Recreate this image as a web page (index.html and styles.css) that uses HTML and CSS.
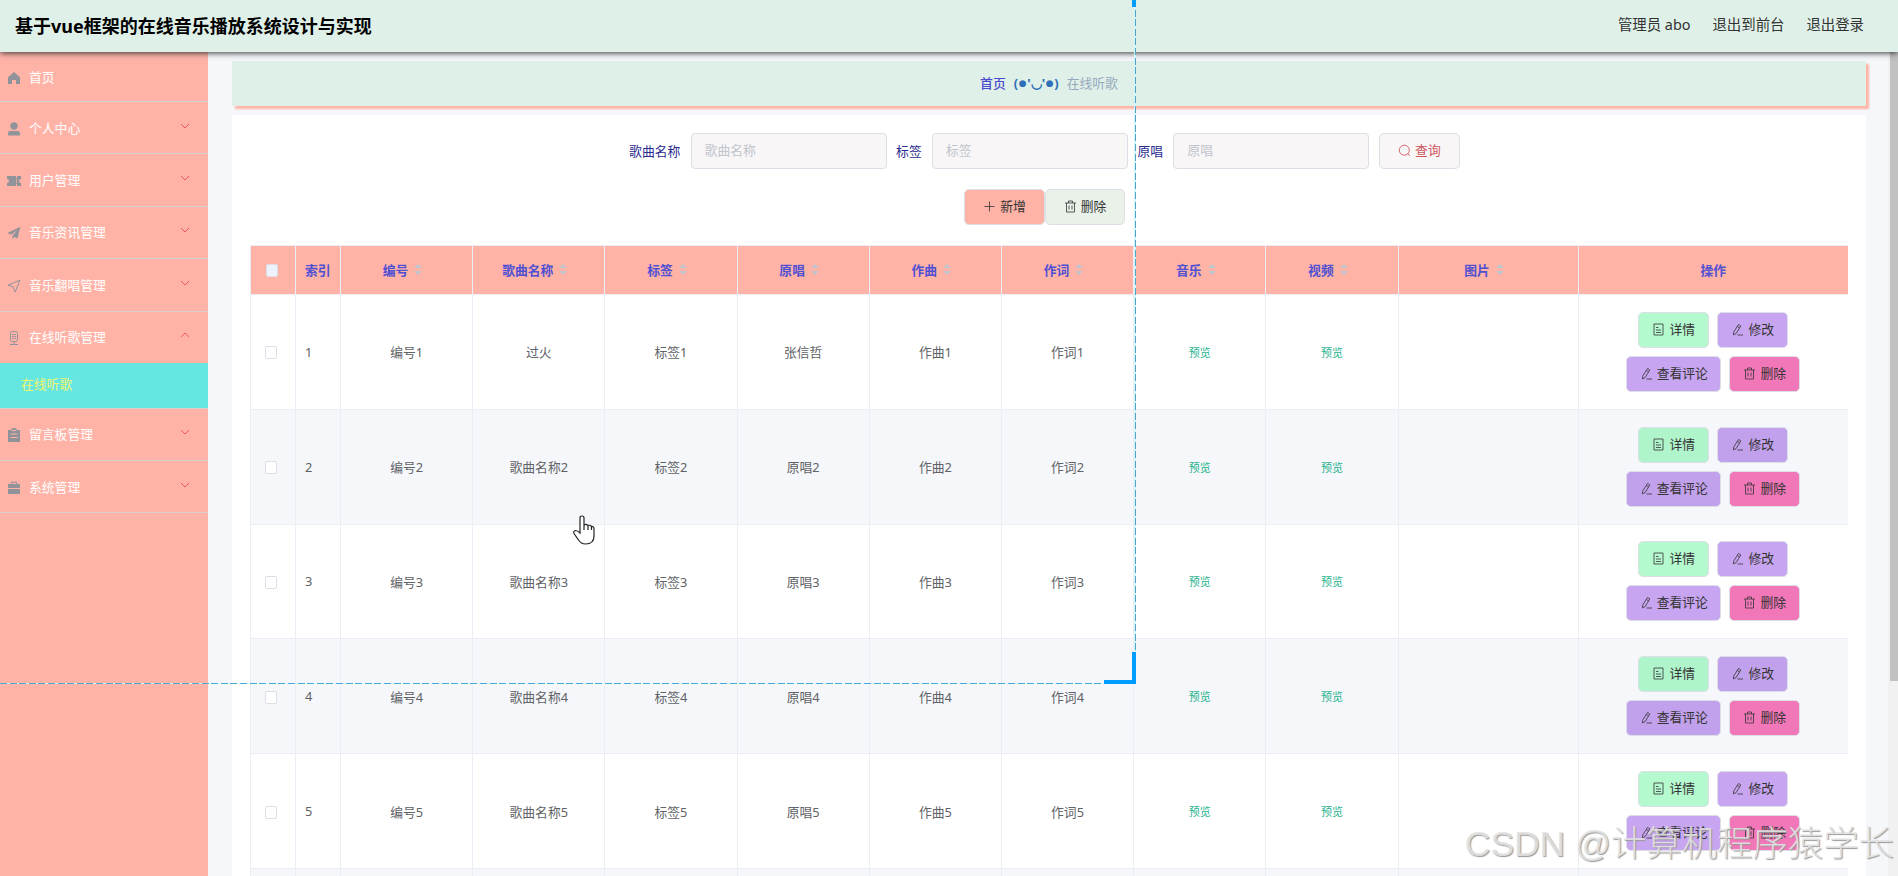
FILE: index.html
```html
<!DOCTYPE html>
<html lang="zh-CN">
<head>
    <meta charset="UTF-8">
    <title>在线听歌</title>
    <link rel="stylesheet" href="styles.css">
</head>
<body>
    <!-- 图标 -->
    <svg class="sprite">
        <symbol id="i-home" viewBox="0 0 14 14"><path d="M7 1L1 6.3V13h4V9h4v4h4V6.3z"/></symbol>
        <symbol id="i-user" viewBox="0 0 14 14"><circle cx="7" cy="4" r="3.7"/><path d="M1 13.4V11q0-2 2.4-2h7.2Q13 9 13 11v2.4z"/></symbol>
        <symbol id="i-ticket" viewBox="0 0 14 14"><path d="M0 2h9v2h1V2h4v3a2 2 0 0 0 0 4v3h-4v-2H9v2H0V9a2 2 0 0 0 0-4zM9 5v1.5h1V5zM9 7.5V9h1V7.5z" fill-rule="evenodd"/></symbol>
        <symbol id="i-plane" viewBox="0 0 14 14"><path d="M13.4.8L.4 7l3.8 1.8L11 3.4 5.6 9.6v3.8l2-2.6 2.8 1.8z"/></symbol>
        <symbol id="i-nav" viewBox="0 0 14 14"><path d="M12.9 1.2L1 6.2l5 1.6L8.2 13z" fill="none" stroke="currentColor"/></symbol>
        <symbol id="i-mic" viewBox="0 0 14 14"><rect x="3.5" y=".5" width="7" height="10" rx="2" fill="none" stroke="currentColor"/><path d="M5 3h1.6v1H5zm2.4 0H9v1H7.4zM5 5h1.6v1H5zm2.4 0H9v1H7.4zM5 7h1.6v1H5zm2.4 0H9v1H7.4zM6.5 10.5h1V13h-1zM3 13h8v1H3z"/></symbol>
        <symbol id="i-board" viewBox="0 0 14 14"><path d="M1 2h3.5V.3h5V2H13v12H1zM3.5 5.5v1h7v-1zM3.5 9v1h7V9zM5 2v1h4V2z" fill-rule="evenodd"/></symbol>
        <symbol id="i-case" viewBox="0 0 14 14"><path d="M4 3V.8h6V3h3v4H1V3zm1 0h4V1.8H5zM1 8h12v5H1z" fill-rule="evenodd"/></symbol>
        <symbol id="i-down" viewBox="0 0 10 6"><path d="M1 1l4 4 4-4" fill="none" stroke="currentColor"/></symbol>
        <symbol id="i-up" viewBox="0 0 10 6"><path d="M1 5l4-4 4 4" fill="none" stroke="currentColor"/></symbol>
        <symbol id="i-search" viewBox="0 0 13 13"><circle cx="6.3" cy="6.2" r="5" fill="none" stroke="currentColor" stroke-width=".9"/><path d="M9.7 9.7l2 2" stroke="currentColor"/></symbol>
        <symbol id="i-plus" viewBox="0 0 13 13"><path d="M6.5 1.5v10M1.5 6.5h10" stroke="currentColor" stroke-width=".8"/></symbol>
        <symbol id="i-del" viewBox="0 0 13 13"><path d="M1 3h11M4.500 3V1h4v2M2.500 3v9h8V3M5 5.500v4M8 5.500v4" fill="none" stroke="currentColor" stroke-width=".8"/></symbol>
        <symbol id="i-doc" viewBox="0 0 13 13"><path d="M2 1h9v11H2zM4 4.500h2.500M4 7h5M4 9.500h5" fill="none" stroke="currentColor" stroke-width=".8"/></symbol>
        <symbol id="i-edit" viewBox="0 0 13 13"><path d="M7.500 1.500l2.300 1.400-4.600 7.600-2.800 1.400.4-3zM6.300 3.500l2.300 1.400M6.500 12h5.500" fill="none" stroke="currentColor" stroke-width=".8"/></symbol>
    </svg>

    <header class="header">
        <h1 class="header-title">基于vue框架的在线音乐播放系统设计与实现</h1>
        <div class="header-right">
            <span>管理员 abo</span>
            <span>退出到前台</span>
            <span>退出登录</span>
        </div>
    </header>

    <div class="container">
        <!-- 左侧菜单 -->
        <ul class="menu">
            <li class="menu-item first"><svg class="m-icon"><use href="#i-home"/></svg>首页</li>
            <li class="menu-item"><svg class="m-icon"><use href="#i-user"/></svg>个人中心<svg class="arrow"><use href="#i-down"/></svg></li>
            <li class="menu-item"><svg class="m-icon"><use href="#i-ticket"/></svg>用户管理<svg class="arrow"><use href="#i-down"/></svg></li>
            <li class="menu-item"><svg class="m-icon"><use href="#i-plane"/></svg>音乐资讯管理<svg class="arrow"><use href="#i-down"/></svg></li>
            <li class="menu-item"><svg class="m-icon"><use href="#i-nav"/></svg>音乐翻唱管理<svg class="arrow"><use href="#i-down"/></svg></li>
            <li class="menu-item open"><svg class="m-icon"><use href="#i-mic"/></svg>在线听歌管理<svg class="arrow"><use href="#i-up"/></svg></li>
            <li class="menu-sub">在线听歌</li>
            <li class="menu-item"><svg class="m-icon"><use href="#i-board"/></svg>留言板管理<svg class="arrow"><use href="#i-down"/></svg></li>
            <li class="menu-item"><svg class="m-icon"><use href="#i-case"/></svg>系统管理<svg class="arrow"><use href="#i-down"/></svg></li>
        </ul>

        <main class="main">
            <div class="breadcrumb">
                <span class="home">首页</span>
                <span class="face">(<i class="dot">●</i>'◡'<i class="dot">●</i>)</span>
                <span class="current">在线听歌</span>
            </div>

            <div class="card">
                <form class="search">
                    <label>歌曲名称</label>
                    <input type="text" placeholder="歌曲名称">
                    <label>标签</label>
                    <input type="text" placeholder="标签">
                    <label>原唱</label>
                    <input type="text" placeholder="原唱">
                    <button type="button" class="btn btn-search"><svg><use href="#i-search"/></svg>查询</button>
                </form>
                <div class="toolbar">
                    <button class="btn btn-add"><svg><use href="#i-plus"/></svg>新增</button>
                    <button class="btn btn-remove"><svg><use href="#i-del"/></svg>删除</button>
                </div>

                <!-- 歌曲列表 -->
                <div class="table">
                    <div class="row head">
                        <div><i class="check"></i></div>
                        <div class="index">索引</div>
                        <div>编号<i class="sort"></i></div>
                        <div>歌曲名称<i class="sort"></i></div>
                        <div>标签<i class="sort"></i></div>
                        <div>原唱<i class="sort"></i></div>
                        <div>作曲<i class="sort"></i></div>
                        <div>作词<i class="sort"></i></div>
                        <div>音乐<i class="sort"></i></div>
                        <div>视频<i class="sort"></i></div>
                        <div>图片<i class="sort"></i></div>
                        <div>操作</div>
                    </div>
                    <div class="row">
                        <div><i class="check"></i></div>
                        <div class="index">1</div>
                        <div>编号1</div>
                        <div>过火</div>
                        <div>标签1</div>
                        <div>张信哲</div>
                        <div>作曲1</div>
                        <div>作词1</div>
                        <div class="link">预览</div>
                        <div class="link">预览</div>
                        <div></div>
                        <div class="ops">
                            <button class="btn btn-info"><svg><use href="#i-doc"/></svg>详情</button>
                            <button class="btn btn-edit"><svg><use href="#i-edit"/></svg>修改</button>
                            <button class="btn btn-edit wide"><svg><use href="#i-edit"/></svg>查看评论</button>
                            <button class="btn btn-del"><svg><use href="#i-del"/></svg>删除</button>
                        </div>
                    </div>
                    <div class="row striped">
                        <div><i class="check"></i></div>
                        <div class="index">2</div>
                        <div>编号2</div>
                        <div>歌曲名称2</div>
                        <div>标签2</div>
                        <div>原唱2</div>
                        <div>作曲2</div>
                        <div>作词2</div>
                        <div class="link">预览</div>
                        <div class="link">预览</div>
                        <div></div>
                        <div class="ops">
                            <button class="btn btn-info"><svg><use href="#i-doc"/></svg>详情</button>
                            <button class="btn btn-edit"><svg><use href="#i-edit"/></svg>修改</button>
                            <button class="btn btn-edit wide"><svg><use href="#i-edit"/></svg>查看评论</button>
                            <button class="btn btn-del"><svg><use href="#i-del"/></svg>删除</button>
                        </div>
                    </div>
                    <div class="row">
                        <div><i class="check"></i></div>
                        <div class="index">3</div>
                        <div>编号3</div>
                        <div>歌曲名称3</div>
                        <div>标签3</div>
                        <div>原唱3</div>
                        <div>作曲3</div>
                        <div>作词3</div>
                        <div class="link">预览</div>
                        <div class="link">预览</div>
                        <div></div>
                        <div class="ops">
                            <button class="btn btn-info"><svg><use href="#i-doc"/></svg>详情</button>
                            <button class="btn btn-edit"><svg><use href="#i-edit"/></svg>修改</button>
                            <button class="btn btn-edit wide"><svg><use href="#i-edit"/></svg>查看评论</button>
                            <button class="btn btn-del"><svg><use href="#i-del"/></svg>删除</button>
                        </div>
                    </div>
                    <div class="row striped">
                        <div><i class="check"></i></div>
                        <div class="index">4</div>
                        <div>编号4</div>
                        <div>歌曲名称4</div>
                        <div>标签4</div>
                        <div>原唱4</div>
                        <div>作曲4</div>
                        <div>作词4</div>
                        <div class="link">预览</div>
                        <div class="link">预览</div>
                        <div></div>
                        <div class="ops">
                            <button class="btn btn-info"><svg><use href="#i-doc"/></svg>详情</button>
                            <button class="btn btn-edit"><svg><use href="#i-edit"/></svg>修改</button>
                            <button class="btn btn-edit wide"><svg><use href="#i-edit"/></svg>查看评论</button>
                            <button class="btn btn-del"><svg><use href="#i-del"/></svg>删除</button>
                        </div>
                    </div>
                    <div class="row">
                        <div><i class="check"></i></div>
                        <div class="index">5</div>
                        <div>编号5</div>
                        <div>歌曲名称5</div>
                        <div>标签5</div>
                        <div>原唱5</div>
                        <div>作曲5</div>
                        <div>作词5</div>
                        <div class="link">预览</div>
                        <div class="link">预览</div>
                        <div></div>
                        <div class="ops">
                            <button class="btn btn-info"><svg><use href="#i-doc"/></svg>详情</button>
                            <button class="btn btn-edit"><svg><use href="#i-edit"/></svg>修改</button>
                            <button class="btn btn-edit wide"><svg><use href="#i-edit"/></svg>查看评论</button>
                            <button class="btn btn-del"><svg><use href="#i-del"/></svg>删除</button>
                        </div>
                    </div>
                    <div class="row striped last">
                        <div></div><div></div><div></div><div></div><div></div><div></div>
                        <div></div><div></div><div></div><div></div><div></div><div></div>
                    </div>
                </div>
            </div>
        </main>
        <div class="scrollbar"><div class="thumb"></div></div>
    </div>

    <!-- 选区框 -->
    <div class="select-box"></div>
    <div class="select-corner"></div>
    <div class="select-tip"></div>
    <svg class="cursor" viewBox="0 0 24 31"><path d="M8 18V3q0-2 2-2t2 2v7q2-1.500 4 .5 2-.8 3.500 1 2.500-.3 2.500 2V21q0 8-8.500 8Q9 29 6.500 25L2 18.500Q1 16 3.500 15.500 5.500 15.500 8 18zM12 10v5M16 10.500V15M19.500 11.500V15" fill="#fff" stroke="#222" stroke-width="1.200"/></svg>
    <div class="watermark">CSDN @计算机程序猿学长</div>
</body>
</html>
```
FILE: styles.css
```css
* {
    box-sizing: border-box;
}
body {
    margin: 0;
    height: 876px;
    overflow: hidden;
    display: flex;
    flex-direction: column;
    background: #f5f7fa;
    font-family: "Noto Sans", "Noto Sans CJK SC", sans-serif;
    font-size: 12.8px;
    color: #606266;
}
.sprite {
    position: absolute;
    width: 0;
    height: 0;
}
/* 顶部 */
.header {
    position: relative;
    z-index: 2;
    flex: none;
    height: 52px;
    padding: 0 34px 0 15px;
    display: flex;
    align-items: center;
    justify-content: space-between;
    background: #dff0e8;
    box-shadow: 0 1px 6px #333;
}
.header-title {
    margin: 0;
    font-size: 18px;
    line-height: 50px;
    color: #000;
}
.header-right {
    display: flex;
    gap: 22px;
    font-size: 14.4px;
    line-height: 48px;
    color: #333;
    padding-bottom: 3px;
}
.container {
    flex: 1;
    min-height: 0;
    display: flex;
}
/* 左侧菜单 */
.menu {
    flex: none;
    width: 208px;
    margin: 0;
    padding: 0;
    list-style: none;
    background: #ffb3a7;
    color: #fff;
}
.menu-item {
    display: flex;
    align-items: center;
    height: 52.4px;
    padding: 0 18px 1px 7px;
    border-bottom: 1px solid #d8d0cd;
}
.menu-item.first {
    height: 50px;
}
.menu-item.open {
    height: 51px;
    border-bottom: 0;
}
.m-icon {
    width: 14px;
    height: 14px;
    margin: 3px 8px 0 0;
    color: #909399;
    fill: #909399;
}
.arrow {
    width: 10px;
    height: 6px;
    margin: 0 0 3px auto;
    color: #f0565c;
}
.menu-sub {
    height: 46px;
    line-height: 43px;
    padding-left: 21px;
    background: #66e6e1;
    color: #f0f56e;
    border-bottom: 1px solid #d8d0cd;
}
/* 内容区 */
.main {
    flex: 1;
    display: flex;
    flex-direction: column;
    gap: 9px;
    padding: 9px 22px 0 24px;
    min-width: 0;
}
.breadcrumb {
    flex: none;
    height: 45px;
    padding-bottom: 2px;
    display: flex;
    align-items: center;
    justify-content: center;
    gap: 8px;
    background: #dff0e8;
    box-shadow: 3px 3px 2px #ffb3a7;
}
.home {
    color: #4b4bd0;
    font-weight: 500;
}
.face {
    display: flex;
    align-items: center;
    justify-content: space-between;
    width: 45px;
    white-space: nowrap;
    font-weight: bold;
    color: #2f6fb8;
}
.dot {
    font-family: "DejaVu Sans", sans-serif;
    font-size: 9px;
    font-style: normal;
    font-weight: normal;
}
.current {
    color: #97a8be;
}
.card {
    flex: 1;
    padding: 18px 18px 0;
    background: #fff;
    min-height: 0;
}
.search {
    display: flex;
    align-items: center;
    justify-content: center;
    margin-right: 9px;
}
.search label {
    padding-bottom: 2px;
    color: #2b2b8f;
}
.search input {
    width: 196px;
    height: 36px;
    margin: 0 9.5px 0 10.3px;
    padding: 0 13px 3px;
    border: 1px solid #dcdfe6;
    border-radius: 4px;
    background: #f8f6f7;
    font: inherit;
}
.search input::placeholder {
    color: #c0c4cc;
}
.toolbar {
    display: flex;
    justify-content: center;
    margin: 20px 9px 20px 0;
}
.btn {
    display: flex;
    align-items: center;
    justify-content: center;
    width: 71px;
    height: 36px;
    padding: 0 0 2px;
    border: 1px solid #dcdfe6;
    border-radius: 5px;
    font: inherit;
    line-height: 18px;
    color: #333;
}
.btn svg {
    width: 13px;
    height: 13px;
    margin: 1px 4px 0 0;
}
.btn-search {
    width: 81px;
    background: #f8f6f7;
    color: #d0575c;
}
.btn-add {
    width: 81px;
    background: #ffb3a7;
}
.btn-remove {
    width: 80px;
    background: #e9f1e9;
}
/* 表格 */
.table {
    border-top: 1px solid #ebeef5;
    border-left: 1px solid #ebeef5;
}
.row {
    display: grid;
    grid-template-columns: 45px 45px repeat(8, 132.2px) 180px 1fr;
    height: 114.8px;
}
.row > div {
    display: flex;
    align-items: center;
    justify-content: center;
    border-right: 1px solid #ebeef5;
    border-bottom: 1px solid #ebeef5;
}
.row > div:last-child {
    border-right: 0;
}
.row > .index {
    justify-content: flex-start;
    padding-left: 9px;
}
.row.head {
    height: 49px;
    background: #ffb3a7;
    color: #5050d2;
    font-weight: bold;
}
.row.head > div {
    padding-bottom: 2px;
}
.row.striped {
    background: #f5f7fa;
}
.row.last {
    height: 20px;
}
.row > .link {
    font-size: 11px;
    color: #1fb38d;
}
.check {
    width: 12px;
    height: 13px;
    margin: 2px 4px 0 0;
    border: 1px solid #dcdfe6;
    border-radius: 2px;
    background: #fff;
}
.head .check {
    margin-right: 2px;
    background: #edf2fc;
}
/* 排序箭头 */
.sort {
    display: flex;
    flex-direction: column;
    gap: 3px;
    margin: 0 8px 0 6px;
}
.sort::before,
.sort::after {
    content: "";
    border: 4px solid transparent;
}
.sort::before {
    border-top: 0;
    border-bottom-color: #c0c4cc;
}
.sort::after {
    border-bottom: 0;
    border-top-color: #c0c4cc;
}
.row > .ops {
    flex-wrap: wrap;
    align-content: center;
    gap: 8px;
    padding: 0 40px;
}
.btn-info {
    background: #b5f9cf;
}
.btn-edit {
    background: #c8a5f0;
}
.btn-del {
    background: #f277b8;
}
.btn.wide {
    width: 95px;
}
.striped .btn-info {
    background: #aff4cb;
}
.striped .btn-edit {
    background: #c2a1ec;
}
.scrollbar {
    width: 10px;
    background: #f1f1f1;
    padding-left: 2px;
}
.thumb {
    height: 629px;
    background: #c1c1c1;
}
/* 浮层 */
.select-box {
    position: absolute;
    z-index: 3;
    left: 0;
    top: 0;
    width: 1136px;
    height: 684px;
    background:
        repeating-linear-gradient(to bottom, #4fa3c4 0 7px, #d9f5fb 7px 9.6px) right / 1px 100% no-repeat,
        repeating-linear-gradient(to right, #45aed6 0 7px, #e8f6fa 7px 9.6px) bottom / 100% 1px no-repeat,
        linear-gradient(#d3f5fb, #d3f5fb) 1134px 0 / 1px 100% no-repeat;
}
.select-corner {
    position: absolute;
    z-index: 4;
    left: 1104px;
    top: 652px;
    width: 32px;
    height: 32px;
    border-right: 4px solid #009dff;
    border-bottom: 4px solid #009dff;
}
.select-tip {
    position: absolute;
    z-index: 4;
    left: 1132px;
    top: 0;
    width: 4px;
    height: 7px;
    background: #009dff;
}
.cursor {
    position: absolute;
    left: 572px;
    top: 515px;
    width: 24px;
    height: 31px;
}
.watermark {
    position: absolute;
    z-index: 5;
    right: 4px;
    top: 817px;
    font-family: "Liberation Sans", "Noto Sans CJK SC", sans-serif;
    font-size: 35.4px;
    font-weight: 300;
    line-height: 54px;
    white-space: nowrap;
    color: rgba(228, 228, 228, .9);
    text-shadow: 1px 1px 1px #999;
}
```
